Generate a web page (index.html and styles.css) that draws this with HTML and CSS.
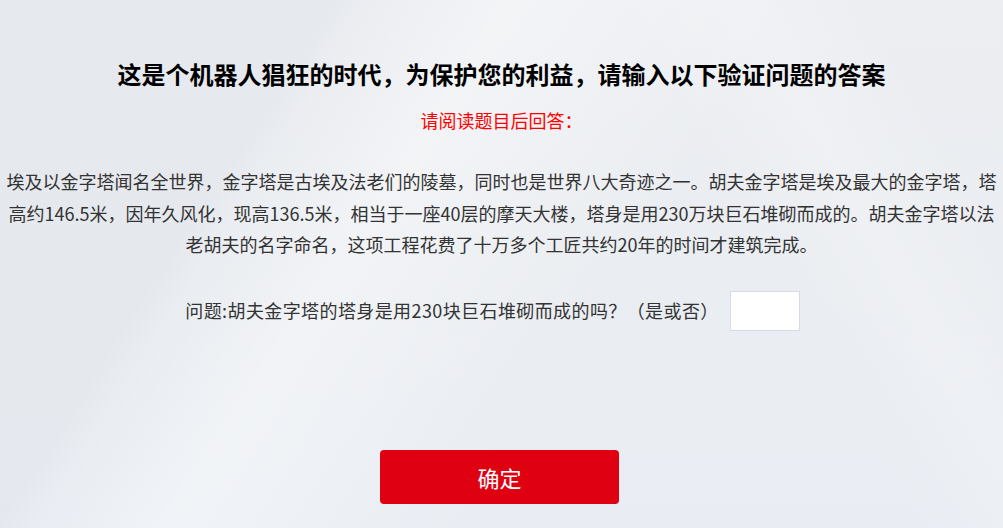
FILE: index.html
```html
<!DOCTYPE html>
<html lang="zh-CN">
<head>
<meta charset="utf-8">
<title>验证问题</title>
<link rel="stylesheet" href="styles.css">
</head>
<body>
<div class="page">
  <div class="content">
    <h1 class="title">这是个机器人猖狂的时代，为保护您的利益，请输入以下验证问题的答案</h1>
    <p class="hint">请阅读题目后回答：</p>
    <p class="passage">埃及以金字塔闻名全世界，金字塔是古埃及法老们的陵墓，同时也是世界八大奇迹之一。胡夫金字塔是埃及最大的金字塔，塔<br>高约146.5米，因年久风化，现高136.5米，相当于一座40层的摩天大楼，塔身是用230万块巨石堆砌而成的。胡夫金字塔以法<br>老胡夫的名字命名，这项工程花费了十万多个工匠共约20年的时间才建筑完成。</p>
    <div class="question">
      <label class="q-text" for="answer">问题:胡夫金字塔的塔身是用230块巨石堆砌而成的吗？（是或否）</label>
      <input class="q-input" id="answer" type="text">
    </div>
    <button class="submit" type="button">确定</button>
  </div>
</div>
</body>
</html>
```
FILE: styles.css
```css
html, body {
  margin: 0;
  padding: 0;
}
body {
  font-family: "Noto Sans CJK SC", "Microsoft YaHei", sans-serif;
  background: #eaedf1;
}
.page {
  position: relative;
  width: 1003px;
  height: 528px;
  overflow: hidden;
  background:
    linear-gradient(123deg, rgba(222,226,232,0.4) 0 25%, rgba(222,226,232,0) 28%),
    linear-gradient(123deg, rgba(255,255,255,0) 0 28%, rgba(255,255,255,0.35) 38%, rgba(255,255,255,0) 60%),
    linear-gradient(60deg, rgba(255,255,255,0) 0 70%, rgba(255,255,255,0.2) 80%, rgba(255,255,255,0) 90%),
    linear-gradient(180deg, #eceef2 0%, #eaedf1 50%, #e9edf3 100%);
}
.content {
  display: flex;
  flex-direction: column;
  align-items: center;
  padding-top: 57px;
}
.title {
  margin: 0;
  font-size: 24px;
  line-height: 34px;
  font-weight: bold;
  color: #000;
}
.hint {
  margin: 14px 0 0;
  font-size: 18px;
  line-height: 30px;
  color: #f00;
}
.passage {
  margin: 31px 0 0;
  font-size: 18px;
  line-height: 31.5px;
  color: #333;
  text-align: center;
  white-space: nowrap;
}
.question {
  margin-top: 30px;
  display: flex;
  align-items: center;
  gap: 11px;
  padding-right: 18px;
}
.q-text {
  font-size: 18px;
  color: #333;
  letter-spacing: 0.4px;
  position: relative;
  top: -1px;
}
.q-input {
  box-sizing: border-box;
  width: 70px;
  height: 40px;
  margin: 0;
  border: 1px solid #d3dbe4;
  background: #fff;
  outline: none;
}
.submit {
  margin-top: 119px;
  margin-right: 4px;
  width: 239px;
  height: 54px;
  border: none;
  border-radius: 4px;
  background: #df0011;
  color: #fff;
  font-family: inherit;
  font-size: 22px;
  cursor: pointer;
}
```
